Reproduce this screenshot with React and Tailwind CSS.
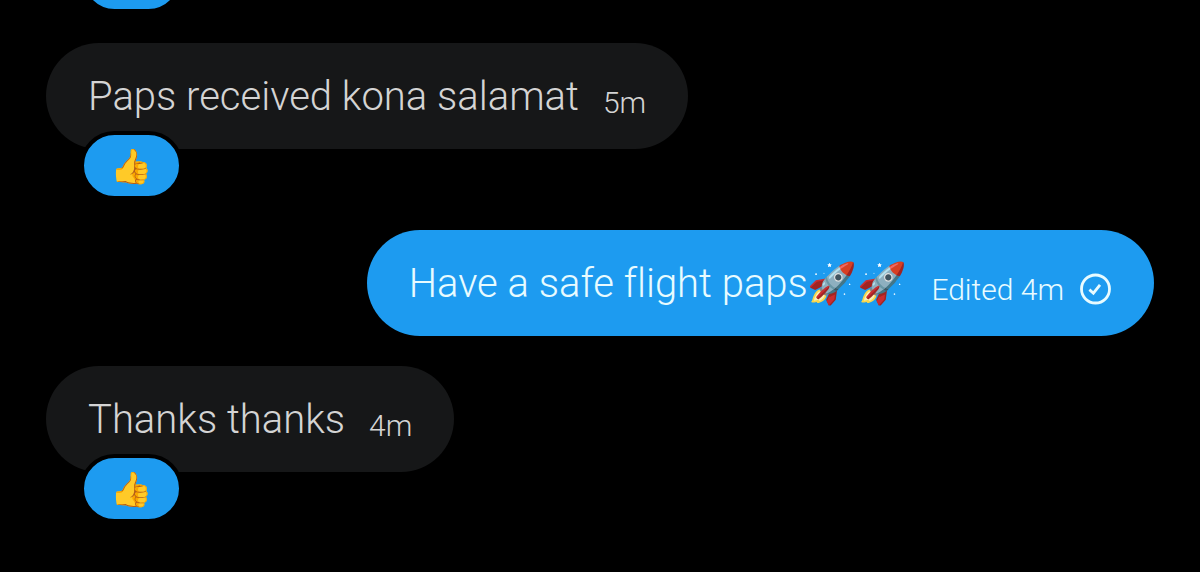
import clsx from 'clsx';

const messages = [
  { id: 1, text: 'Paps received kona salamat', time: '5m', reaction: '👍' },
  { id: 2, text: 'Have a safe flight paps', emoji: '🚀🚀', time: 'Edited 4m', own: true },
  { id: 3, text: 'Thanks thanks', time: '4m', reaction: '👍' },
];

function SentIcon() {
  return (
    <svg viewBox="0 0 32 32" className="mt-3 ml-4 h-8 w-8 shrink-0" fill="none" stroke="currentColor" role="img" aria-label="Sent">
      <circle cx="15.5" cy="16" r="14" strokeWidth="2.8" />
      <path d="M9.4 16.6l4 3.6 6.6-8.4" strokeWidth="2.8" />
    </svg>
  );
}

function Reaction({ emoji, className }) {
  return (
    <button
      type="button"
      aria-label="Reaction"
      className={clsx(
        'relative ml-[34px] flex h-[69px] w-[103px] items-center justify-center rounded-full border-4 border-black bg-[#1d9bf0] text-[34px] leading-none',
        className
      )}
    >
      {emoji}
    </button>
  );
}

function Message({ text, emoji, time, own, reaction }) {
  return (
    <li className={clsx('flex flex-col', own ? 'items-end' : 'items-start')}>
      <div
        className={clsx(
          'flex h-[106px] items-center rounded-full px-[42px]',
          own ? 'bg-[#1d9bf0] text-[#e8fbff]' : 'bg-[#161718] text-[#d4d4d4]'
        )}
      >
        <p className="pt-0.5 text-[40px] leading-[52px] whitespace-nowrap">
          {text}
          {emoji}
        </p>
        <span className="ml-6 pt-3.5 text-[30px] leading-9 whitespace-nowrap">{time}</span>
        {own && <SentIcon />}
      </div>
      {reaction && <Reaction emoji={reaction} className="-mt-[18px]" />}
    </li>
  );
}

export default function App() {
  return (
    <main className="h-screen overflow-hidden bg-black font-['Roboto','Noto_Color_Emoji',sans-serif] font-light [font-variant-ligatures:none]">
      {/* The thread is scrolled, so the message above shows only the edge of its reaction */}
      <ul className="-mt-14 flex flex-col gap-[30px] px-[46px]">
        <li>
          <Reaction />
        </li>
        {messages.map((message) => (
          <Message key={message.id} {...message} />
        ))}
      </ul>
    </main>
  );
}
